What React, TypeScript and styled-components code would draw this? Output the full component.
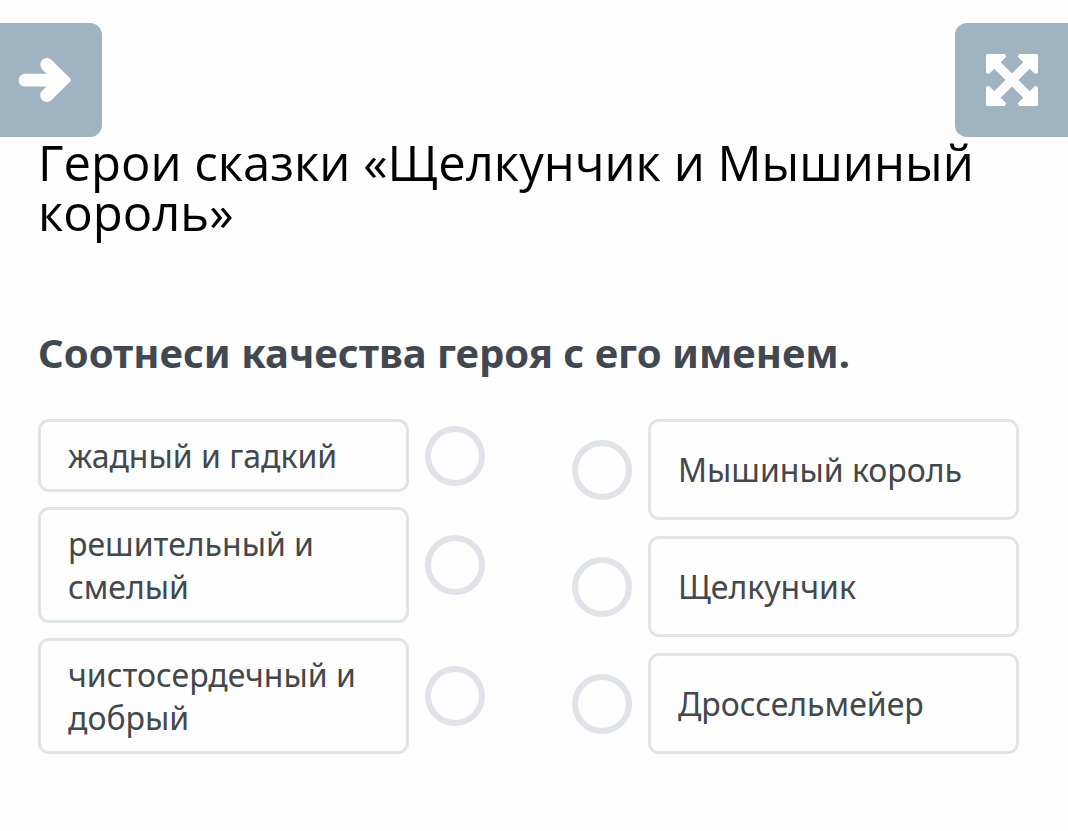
import React from "react";
import styled, { createGlobalStyle } from "styled-components";

const GlobalStyle = createGlobalStyle`
  *, *::before, *::after { box-sizing: border-box; }
  body {
    margin: 0;
    background: #fefefe;
    color: #43484d;
    font-family: "Noto Sans", "Open Sans", sans-serif;
  }
`;

const Page = styled.div`
  padding: 23px 0 40px;
`;

const Toolbar = styled.header`
  display: flex;
  justify-content: space-between;
`;

const ToolButton = styled.button<{ $side: "left" | "right" }>`
  display: flex;
  align-items: center;
  height: 114px;
  padding: ${(p) => (p.$side === "left" ? "0 31px 0 18px" : "0 30px 0 31px")};
  border: 0;
  border-radius: ${(p) => (p.$side === "left" ? "0 12px 12px 0" : "12px 0 0 12px")};
  background: #9fb3c0;
  color: #fff;
  cursor: pointer;
`;

const Content = styled.main`
  padding: 0 49px 0 38px;
`;

const Title = styled.h1`
  margin: 0;
  color: #000;
  font-family: "Open Sans", "Noto Sans", sans-serif;
  font-size: 49px;
  font-weight: 400;
  line-height: 50px;
`;

const Question = styled.h2`
  margin: 89px 0 39px;
  color: #424851;
  font-size: 40px;
  font-weight: 700;
  line-height: 54px;
`;

const Board = styled.div`
  display: flex;
  gap: 87px;
`;

const Column = styled.div<{ $gap: number }>`
  flex: 1 1 0;
  min-width: 0;
  display: flex;
  flex-direction: column;
  gap: ${(p) => p.$gap}px;
`;

const Row = styled.div<{ $reverse?: boolean; $grow?: boolean }>`
  display: flex;
  flex-direction: ${(p) => (p.$reverse ? "row-reverse" : "row")};
  flex-grow: ${(p) => (p.$grow ? 1 : 0)};
  gap: 16px;
`;

const Card = styled.label`
  flex: 1 1 0;
  min-width: 0;
  display: flex;
  align-items: center;
  padding: 12px 27px;
  border: 3px solid #dfe5e5;
  border-radius: 11px;
  font-size: 32px;
  line-height: 43px;
  cursor: pointer;
`;

const Point = styled.input`
  appearance: none;
  flex: none;
  align-self: center;
  width: 60px;
  height: 60px;
  margin: 0;
  border: 6px solid #e0e4e8;
  border-radius: 50%;
  cursor: pointer;

  &:checked { border-color: #9fb3c0; }
`;

const ArrowIcon = () => (
  <svg width="53" height="46" viewBox="0 0 53 46" fill="currentColor" aria-hidden="true">
    <path d="M7 16.8H28.5L24.3 12.4A6.6 6.6 0 0 1 33.4 2.8L52 21.2Q53.6 23 52 24.8L33.4 43.2A6.6 6.6 0 0 1 24.3 33.6L28.5 29.6H7A6.4 6.4 0 0 1 7 16.8Z" />
  </svg>
);

const head =
  "M1.5 0H18.5Q20.8 1.6 19.5 3.5L14.5 8.5L8.5 14.5L3.5 19.5Q1.6 20.8 0 18.5V1.5Q0 0 1.5 0Z";

const ExpandIcon = () => (
  <svg width="52" height="52" viewBox="0 0 52 52" fill="currentColor" aria-hidden="true">
    <path d="M8 8L44 44M44 8L8 44" stroke="currentColor" strokeWidth="9.2" />
    {[0, 90, 180, 270].map((angle) => (
      <path key={angle} d={head} transform={`rotate(${angle} 26 26)`} />
    ))}
  </svg>
);

const qualities = ["жадный и гадкий", "решительный и смелый", "чистосердечный и добрый"];
const heroes = ["Мышиный король", "Щелкунчик", "Дроссельмейер"];

export default function App() {
  return (
    <>
      <GlobalStyle />
      <Page>
        <Toolbar>
          <ToolButton type="button" $side="left" aria-label="Далее">
            <ArrowIcon />
          </ToolButton>
          <ToolButton type="button" $side="right" aria-label="На весь экран">
            <ExpandIcon />
          </ToolButton>
        </Toolbar>
        <Content>
          <Title>Герои сказки «Щелкунчик и Мышиный король»</Title>
          <Question>Соотнеси качества героя с его именем.</Question>
          <Board>
            <Column $gap={15}>
              {qualities.map((text, i) => (
                <Row key={text}>
                  <Card htmlFor={`quality-${i}`}>{text}</Card>
                  <Point type="radio" name="quality" id={`quality-${i}`} />
                </Row>
              ))}
            </Column>
            <Column $gap={16}>
              {heroes.map((text, i) => (
                <Row key={text} $reverse $grow>
                  <Card htmlFor={`hero-${i}`}>{text}</Card>
                  <Point type="radio" name="hero" id={`hero-${i}`} />
                </Row>
              ))}
            </Column>
          </Board>
        </Content>
      </Page>
    </>
  );
}
